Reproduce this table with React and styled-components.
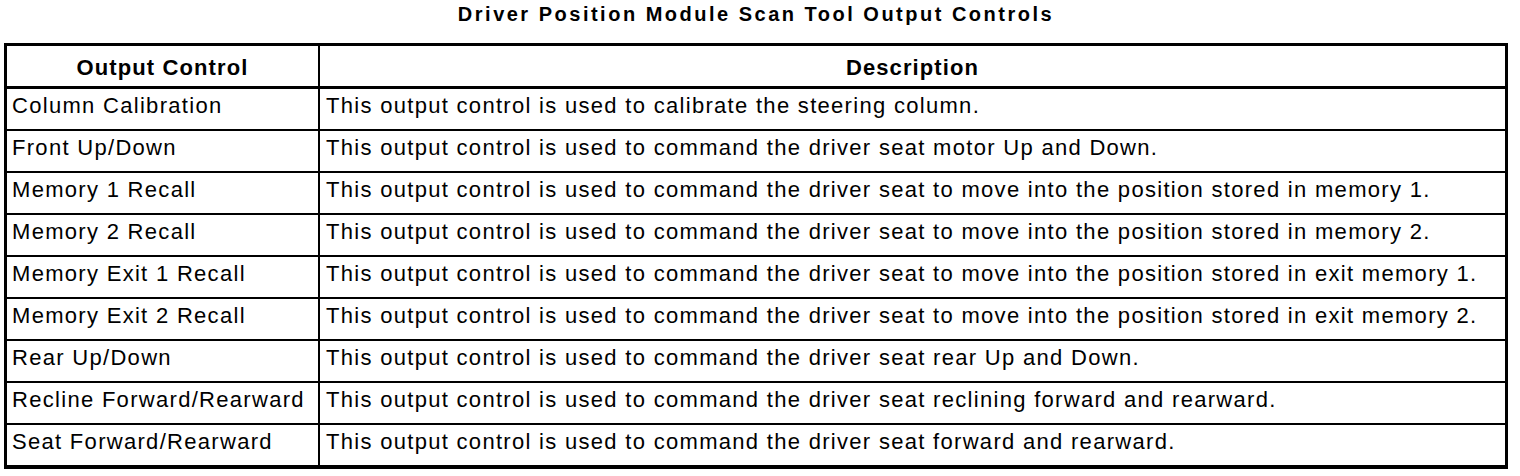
import React from "react";
import styled, { createGlobalStyle } from "styled-components";

const rows = [
  ["Column Calibration", "This output control is used to calibrate the steering column."],
  ["Front Up/Down", "This output control is used to command the driver seat motor Up and Down."],
  ["Memory 1 Recall", "This output control is used to command the driver seat to move into the position stored in memory 1."],
  ["Memory 2 Recall", "This output control is used to command the driver seat to move into the position stored in memory 2."],
  ["Memory Exit 1 Recall", "This output control is used to command the driver seat to move into the position stored in exit memory 1."],
  ["Memory Exit 2 Recall", "This output control is used to command the driver seat to move into the position stored in exit memory 2."],
  ["Rear Up/Down", "This output control is used to command the driver seat rear Up and Down."],
  ["Recline Forward/Rearward", "This output control is used to command the driver seat reclining forward and rearward."],
  ["Seat Forward/Rearward", "This output control is used to command the driver seat forward and rearward."],
];

function App() {
  return (
    <Page>
      <GlobalStyle />
      <Title>Driver Position Module Scan Tool Output Controls</Title>
      <Table>
        <Row>
          <Cell first header>Output Control</Cell>
          <Cell header>Description</Cell>
        </Row>
        {rows.map(([name, desc]) => (
          <Row key={name}>
            <Cell first>{name}</Cell>
            <Cell>{desc}</Cell>
          </Row>
        ))}
      </Table>
    </Page>
  );
}

export default App;

const GlobalStyle = createGlobalStyle`
  body {
    margin: 0;
    background: #fff;
    color: #000;
    font-family: "Liberation Sans", Arial, sans-serif;
  }
`;

const Page = styled.div`
  width: 1520px;
  height: 476px;
  padding-left: 4px;
  box-sizing: border-box;
`;

const Title = styled.h1`
  margin: 0;
  height: 43px;
  width: 1504px;
  box-sizing: border-box;
  padding-top: 2px;
  text-align: center;
  font-size: 20px;
  font-weight: bold;
  line-height: 24px;
  letter-spacing: 2.5px;
`;

const Table = styled.div`
  width: 1504px;
  box-sizing: border-box;
  border: 3px solid #000;
  border-bottom-width: 4px;
`;

const Row = styled.div`
  display: grid;
  grid-template-columns: 313px 1fr;
  height: 40px;
  & + & {
    border-top: 2px solid #000;
  }
  &:nth-child(2) {
    border-top-width: 3px;
  }
`;

const Cell = styled.div`
  font-size: 22px;
  letter-spacing: ${({ header }) => (header ? "1.1px" : "1.3px")};
  line-height: ${({ header }) => (header ? "37px" : "34px")};
  padding: ${({ header, first }) =>
    header ? "3px 0 0 0" : first ? "0 0 6px 5px" : "0 0 6px 6px"};
  white-space: nowrap;
  font-weight: ${({ header }) => (header ? "bold" : "normal")};
  text-align: ${({ header }) => (header ? "center" : "left")};
  border-right: ${({ first }) => (first ? "2px solid #000" : "none")};
  box-sizing: border-box;
`;
